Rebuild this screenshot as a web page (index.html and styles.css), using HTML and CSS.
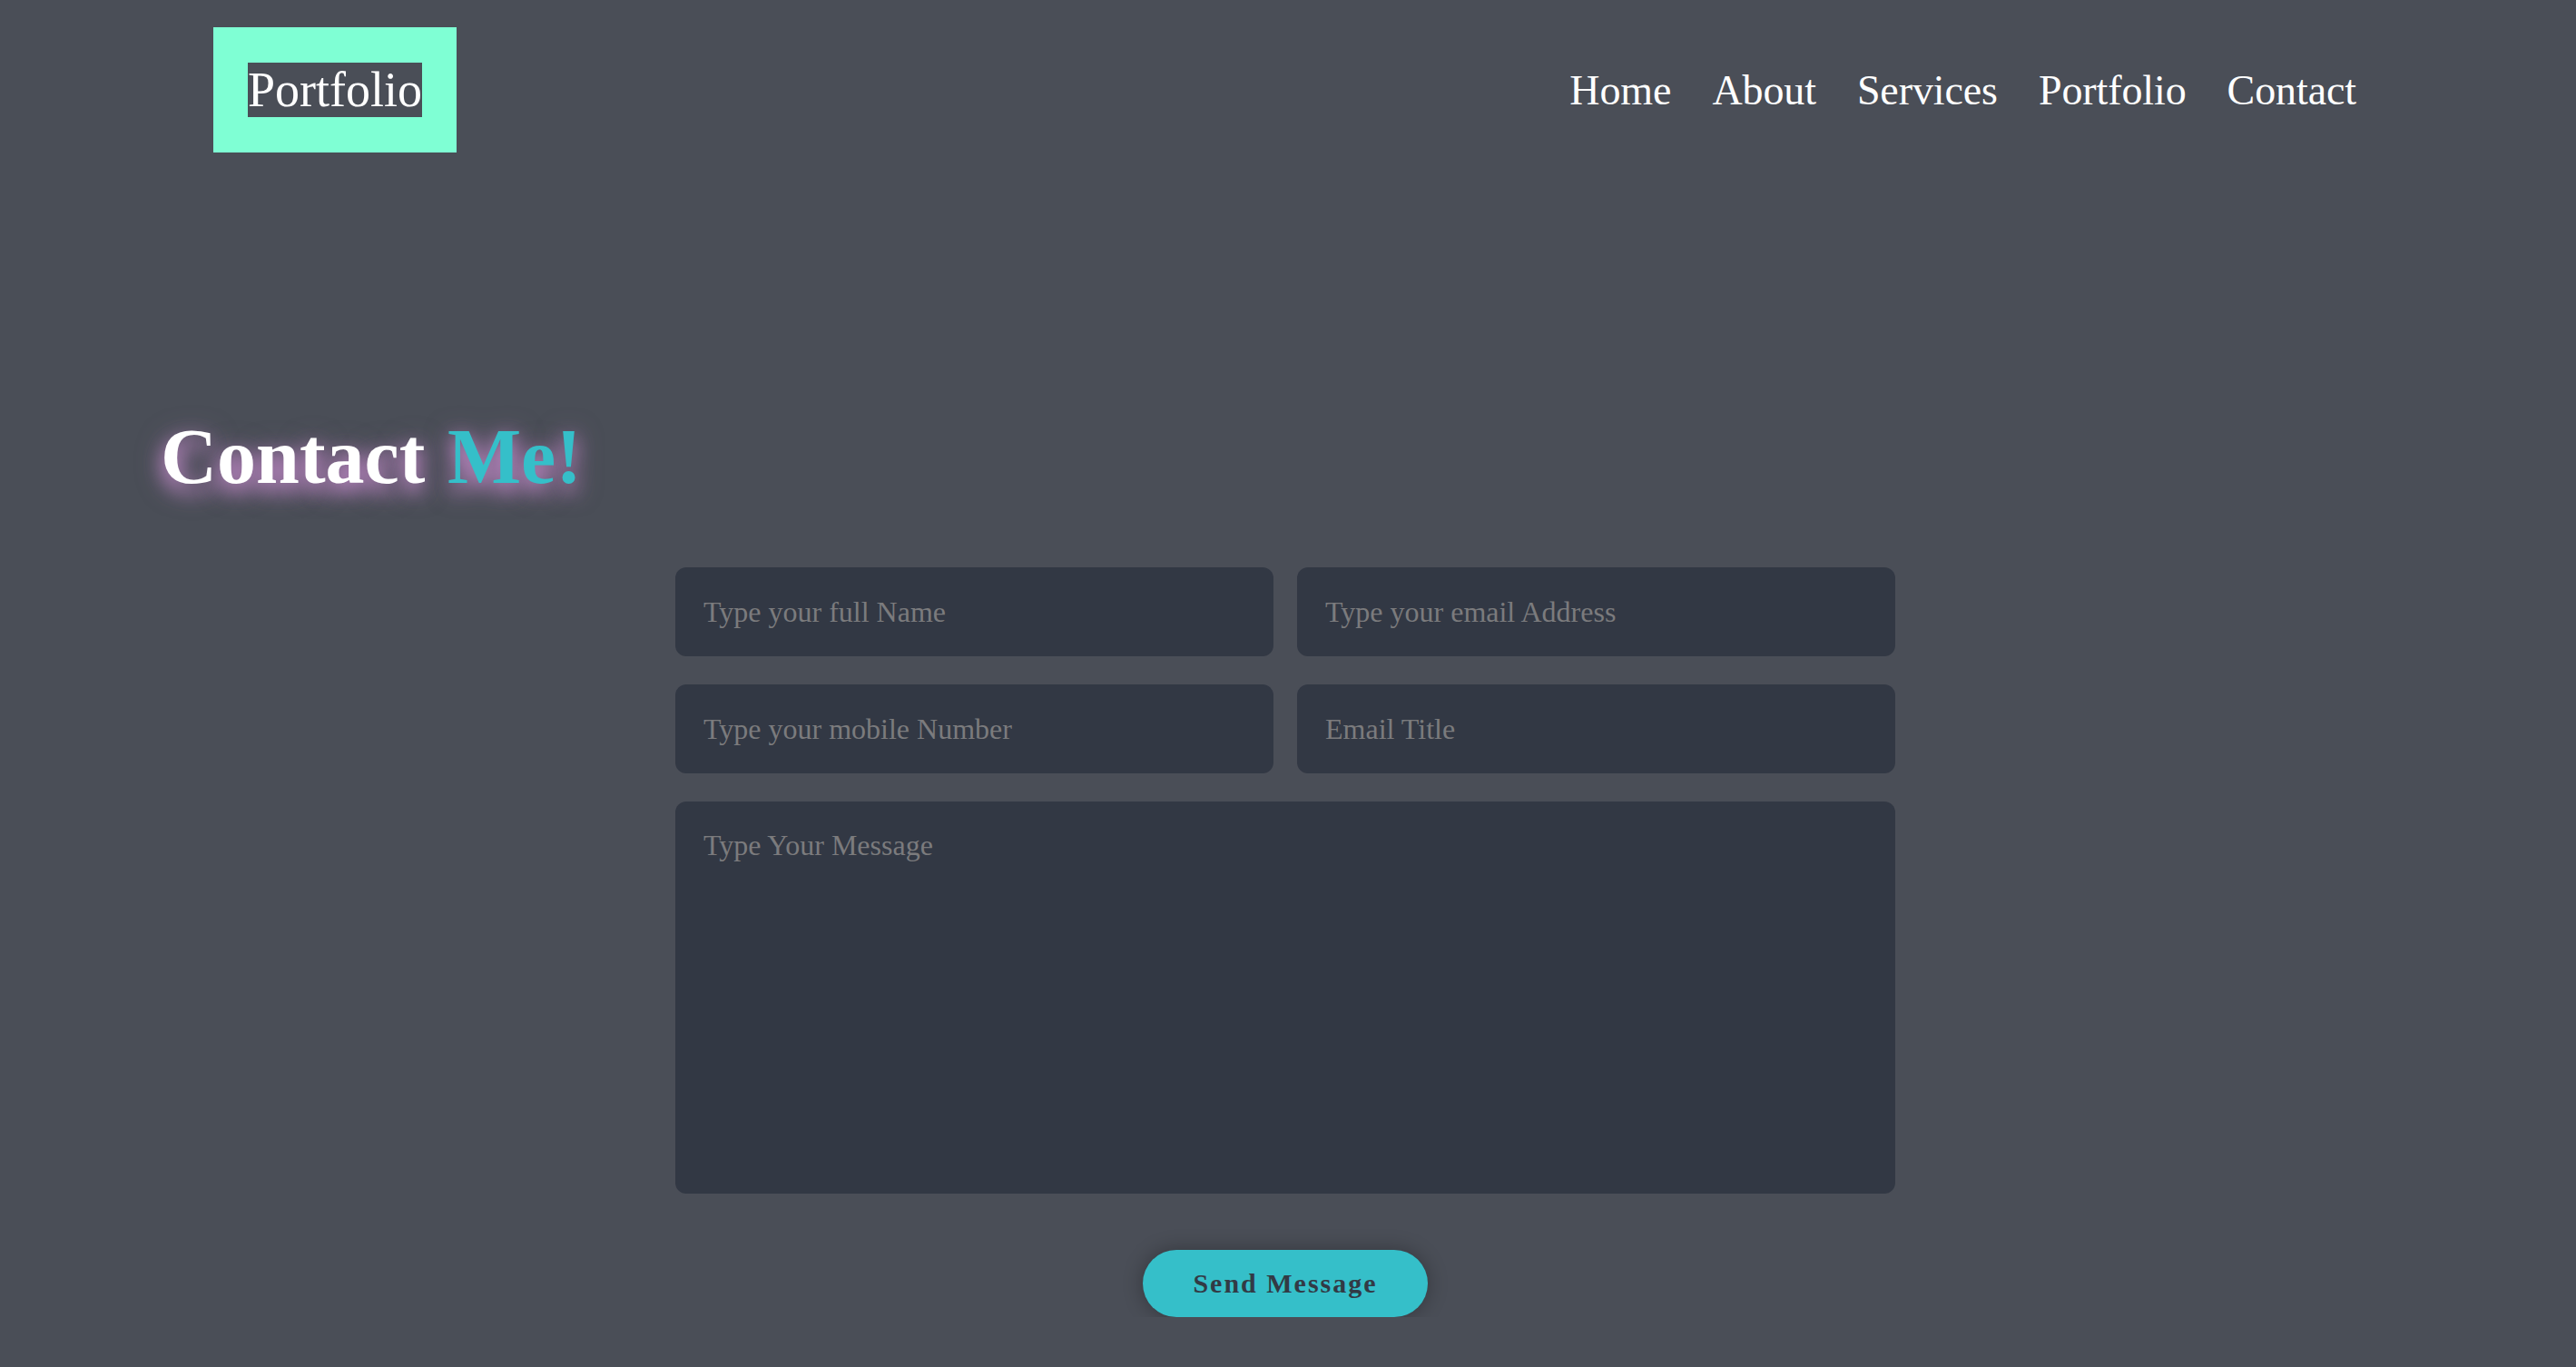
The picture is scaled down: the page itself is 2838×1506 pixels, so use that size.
FILE: index.html
```html
<!DOCTYPE html>
<html lang="en">
<head>
<meta charset="utf-8">
<title>Contact Me</title>
<link rel="stylesheet" href="styles.css">
</head>
<body>
<header class="header">
  <div class="logo"><span class="logo-text">Portfolio</span></div>
  <nav class="nav">
    <a class="nav-link" href="#">Home</a>
    <a class="nav-link" href="#">About</a>
    <a class="nav-link" href="#">Services</a>
    <a class="nav-link" href="#">Portfolio</a>
    <a class="nav-link" href="#">Contact</a>
  </nav>
</header>
<section class="contact">
  <h2 class="title">Contact <span class="accent">Me!</span></h2>
  <form class="form">
    <div class="grid">
      <input class="field" type="text" placeholder="Type your full Name">
      <input class="field" type="email" placeholder="Type your email Address">
      <input class="field" type="text" placeholder="Type your mobile Number">
      <input class="field" type="text" placeholder="Email Title">
      <textarea class="message" placeholder="Type Your Message"></textarea>
    </div>
    <div class="actions">
      <button class="btn" type="button">Send Message</button>
    </div>
  </form>
</section>
</body>
</html>
```
FILE: styles.css
```css
html {
  background: #4a4e57;
}
body {
  margin: 0;
  background: #4a4e57;
  font-family: "Liberation Serif", "Times New Roman", serif;
  color: #fff;
  overflow: hidden;
}
.header {
  display: flex;
  justify-content: space-between;
  align-items: center;
  padding: 30px 242px 0 235px;
}
.logo {
  background: #7fffd4;
  padding: 38px;
  font-size: 54px;
  line-height: normal;
}
.logo-text {
  background: #4a4e57;
  color: #fff;
}
.nav {
  display: flex;
  gap: 45px;
}
.nav-link {
  color: #fff;
  text-decoration: none;
  font-size: 46px;
  letter-spacing: -0.1px;
}
.contact {
  padding: 0 6px 0 0;
}
.title {
  margin: 285px 0 0 177px;
  font-size: 86px;
  font-weight: bold;
  line-height: normal;
  color: #fff;
  text-shadow: 0 9px 22px rgba(215, 150, 220, 0.95), 0 6px 30px rgba(190, 130, 200, 0.5);
  word-spacing: 3px;
}
.accent {
  color: #35bfc9;
}
.form {
  width: 1344px;
  margin: 72px auto 0;
}
.grid {
  display: grid;
  grid-template-columns: 1fr 1fr;
  column-gap: 26px;
  row-gap: 31px;
}
.field,
.message {
  box-sizing: border-box;
  width: 100%;
  border: none;
  outline: none;
  border-radius: 12px;
  background: #323844;
  color: #ddd;
  font-family: "Liberation Serif", "Times New Roman", serif;
  font-size: 32px;
}
.field {
  height: 98px;
  padding: 0 31px;
}
.message {
  grid-column: 1 / 3;
  height: 432px;
  padding: 30px 31px;
  resize: none;
  display: block;
}
.field::placeholder,
.message::placeholder {
  color: #7b7b7d;
}
.actions {
  display: flex;
  justify-content: center;
  margin-top: 62px;
}
.btn {
  width: 314px;
  height: 74px;
  border: none;
  border-radius: 37px;
  background: #35bfc9;
  color: #323a45;
  font-family: "Liberation Serif", "Times New Roman", serif;
  font-weight: bold;
  font-size: 30px;
  letter-spacing: 2px;
  box-shadow: 0 0 22px rgba(0, 0, 0, 0.3);
  cursor: pointer;
}
```
